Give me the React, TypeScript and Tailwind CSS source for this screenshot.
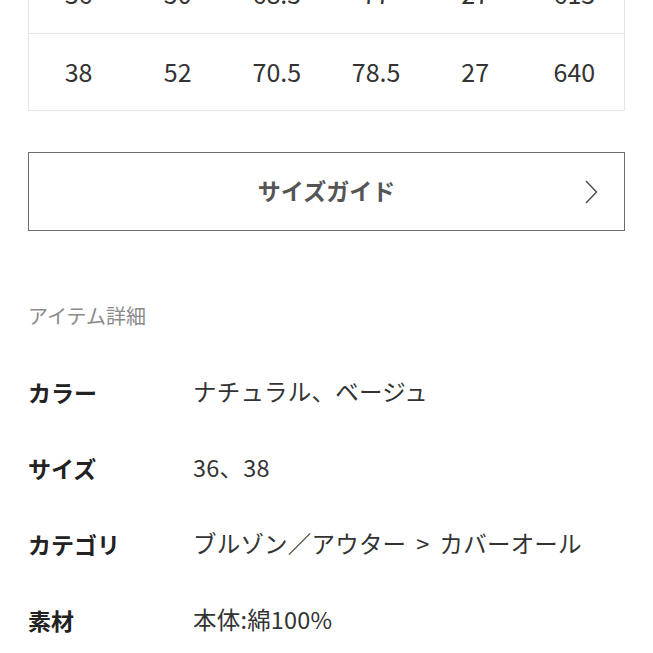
import React from "react";

const rows = [
  ["36", "50", "68.5", "77", "27", "613"],
  ["38", "52", "70.5", "78.5", "27", "640"],
];

const details: [string, React.ReactNode][] = [
  ["カラー", "ナチュラル、ベージュ"],
  ["サイズ", "36、38"],
  [
    "カテゴリ",
    <>
      ブルゾン／アウター<span className="mx-[10px]">&gt;</span>カバーオール
    </>,
  ],
  ["素材", "本体:綿100%"],
];

const jp = { fontFamily: '"Noto Sans CJK JP", sans-serif' };

export default function App() {
  return (
    <div className="w-[653px] h-[653px] overflow-hidden bg-white px-[28px]" style={jp}>
      <div className="-mt-[44px] border-x border-b border-[#e4e4e4]">
        {rows.map((r, i) => (
          <div
            key={i}
            className={`grid grid-cols-6 h-[77px] items-center ${i > 0 ? "border-t border-[#e4e4e4]" : ""}`}
          >
            {r.map((c, j) => (
              <div key={j} className="text-center text-[25px] leading-none text-[#333] -mt-[2px]">
                {c}
              </div>
            ))}
          </div>
        ))}
      </div>

      <div className="mt-[41px] h-[79px] border-[1.5px] border-[#6b6b6b] flex items-center relative">
        <div className="flex-1 text-center text-[23px] leading-none font-bold text-[#555] -mt-[2px]">
          サイズガイド
        </div>
        <svg
          className="absolute right-[26px] top-1/2 -translate-y-1/2"
          width="14"
          height="25"
          viewBox="0 0 14 25"
          fill="none"
        >
          <path d="M2 1.5 L12.5 12.5 L2 23.5" stroke="#555" strokeWidth="1.6" />
        </svg>
      </div>

      <div className="mt-[71px] h-[28px] flex items-center text-[20px] text-[#8a8a8a]">
        アイテム詳細
      </div>

      <div className="mt-[24px]">
        {details.map(([k, v]) => (
          <div key={k} className="h-[76px] flex items-center">
            <div className="w-[165px] text-[23px] leading-none font-bold text-[#222]">{k}</div>
            <div className="text-[23.5px] leading-none text-[#333] tracking-[0.2px]">{v}</div>
          </div>
        ))}
      </div>
    </div>
  );
}
